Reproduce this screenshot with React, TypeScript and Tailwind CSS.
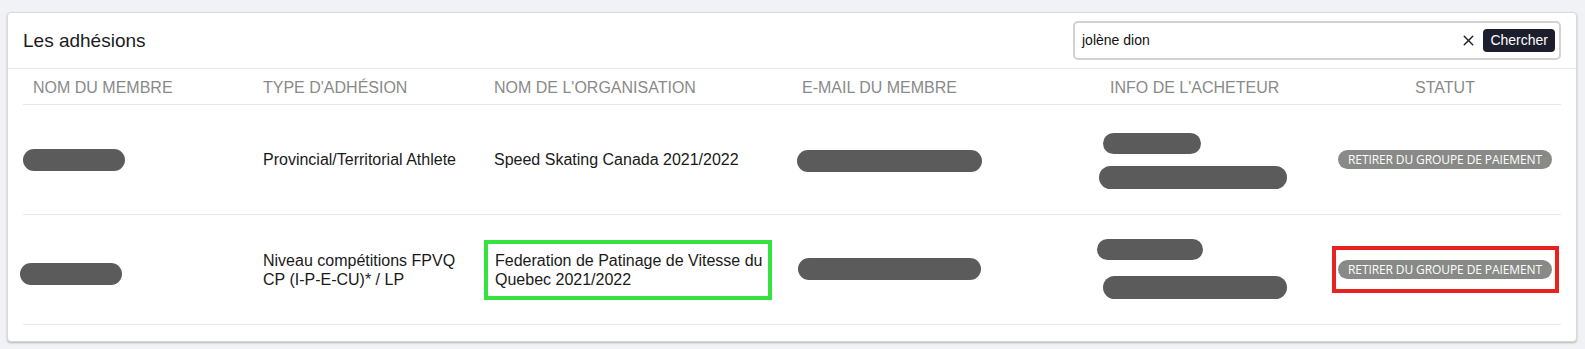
import { X } from "lucide-react";

type Row = {
  nameBlob: { w: number; ml: number; mt: number };
  type: string[];
  org: string;
  highlightOrg?: boolean;
  emailBlob: { w: number; ml: number; mt: number };
  buyer: { w1: number; ml1: number; w2: number; ml2: number; gap: number; mt: number };
  highlightStatus?: boolean;
};

const rows: Row[] = [
  {
    nameBlob: { w: 102, ml: 0, mt: 1 },
    type: ["Provincial/Territorial Athlete"],
    org: "Speed Skating Canada 2021/2022",
    emailBlob: { w: 185, ml: 4, mt: 2 },
    buyer: { w1: 98, ml1: 3, w2: 188, ml2: -1, gap: 12, mt: 2 },
  },
  {
    nameBlob: { w: 102, ml: -3, mt: 8 },
    type: ["Niveau compétitions FPVQ", "CP (I-P-E-CU)* / LP"],
    org: "Federation de Patinage de Vitesse du Quebec 2021/2022",
    highlightOrg: true,
    emailBlob: { w: 183, ml: 5, mt: -2 },
    buyer: { w1: 106, ml1: -3, w2: 184, ml2: 3, gap: 16, mt: -2 },
    highlightStatus: true,
  },
];

const columns = [
  "NOM DU MEMBRE",
  "TYPE D'ADHÉSION",
  "NOM DE L'ORGANISATION",
  "E-MAIL DU MEMBRE",
  "INFO DE L'ACHETEUR",
];

function Blob({ w, ml, h = 21 }: { w: number; ml: number; h?: number }) {
  return <div className="rounded-full bg-[#5b5b5c]" style={{ width: w, marginLeft: ml, height: h }} />;
}

function StatusBadge() {
  return (
    <span className="inline-flex h-[19px] items-center rounded-full bg-[#878a86] px-[10px] font-['Open_Sans',sans-serif] text-[12px] font-medium tracking-[-0.1px] text-white">
      RETIRER DU GROUPE DE PAIEMENT
    </span>
  );
}

export default function App() {
  const grid = "grid grid-cols-[230px_231px_308px_308px_229px_232px]";

  return (
    <div className="h-[349px] w-[1585px] bg-[#f1f2f6] pt-[12px] font-['Liberation_Sans',Arial,sans-serif]">
      <div className="ml-[7px] w-[1570px] rounded-[4px] border border-[#d9d9dc] bg-white pb-[16px] shadow-[0_1px_2px_rgba(0,0,0,0.25)]">
        {/* Header */}
        <div className="flex h-[56px] items-center justify-between border-b border-[#e8e8ea] px-[15px]">
          <h2 className="pt-[1px] text-[19px] text-[#1c1c1c]">Les adhésions</h2>
          <div className="flex h-[39px] w-[488px] items-center rounded-[5px] border-2 border-[#d2d2d4] pl-[7px] pr-[4px]">
            <span className="flex-1 text-[14px] text-[#111]">jolène dion</span>
            <X size={17} strokeWidth={2} className="mr-[6px] text-[#222]" />
            <button className="h-[23px] rounded-[4px] bg-[#1c1e2e] px-[7px] text-[14px] text-white">Chercher</button>
          </div>
        </div>

        {/* Table */}
        <div className="mx-[15px]">
          <div className={`${grid} h-[36px] items-center border-b border-[#e8e8ea] pt-[3px] text-[16px] text-[#8a8a8a]`}>
            {columns.map((c) => (
              <div key={c} className="pl-[10px]">
                {c}
              </div>
            ))}
            <div className="text-center">STATUT</div>
          </div>

          {rows.map((r, i) => (
            <div key={i} className={`${grid} h-[110px] items-center border-b border-[#e8e8ea] text-[16px] leading-[19px] text-[#1a1a1a]`}>
              <div style={{ marginTop: r.nameBlob.mt }}>
                <Blob w={r.nameBlob.w} ml={r.nameBlob.ml} h={22} />
              </div>
              <div className="pl-[10px]">
                {r.type.map((t) => (
                  <div key={t}>{t}</div>
                ))}
              </div>
              <div>
                {r.highlightOrg ? (
                  <div className="w-[288px] border-4 border-[#34e33d] py-[7px] pl-[7px] pr-0">{r.org}</div>
                ) : (
                  <div className="pl-[10px]">{r.org}</div>
                )}
              </div>
              <div className="pl-[1px]" style={{ marginTop: r.emailBlob.mt }}>
                <Blob w={r.emailBlob.w} ml={r.emailBlob.ml} h={22} />
              </div>
              <div className="flex flex-col" style={{ gap: r.buyer.gap, marginTop: r.buyer.mt }}>
                <Blob w={r.buyer.w1} ml={r.buyer.ml1} h={21} />
                <Blob w={r.buyer.w2} ml={r.buyer.ml2} h={23} />
              </div>
              <div className="flex justify-center">
                {r.highlightStatus ? (
                  <div className="flex h-[47px] w-[227px] items-center justify-center border-4 border-[#e8221e]">
                    <StatusBadge />
                  </div>
                ) : (
                  <StatusBadge />
                )}
              </div>
            </div>
          ))}
        </div>
      </div>
    </div>
  );
}
